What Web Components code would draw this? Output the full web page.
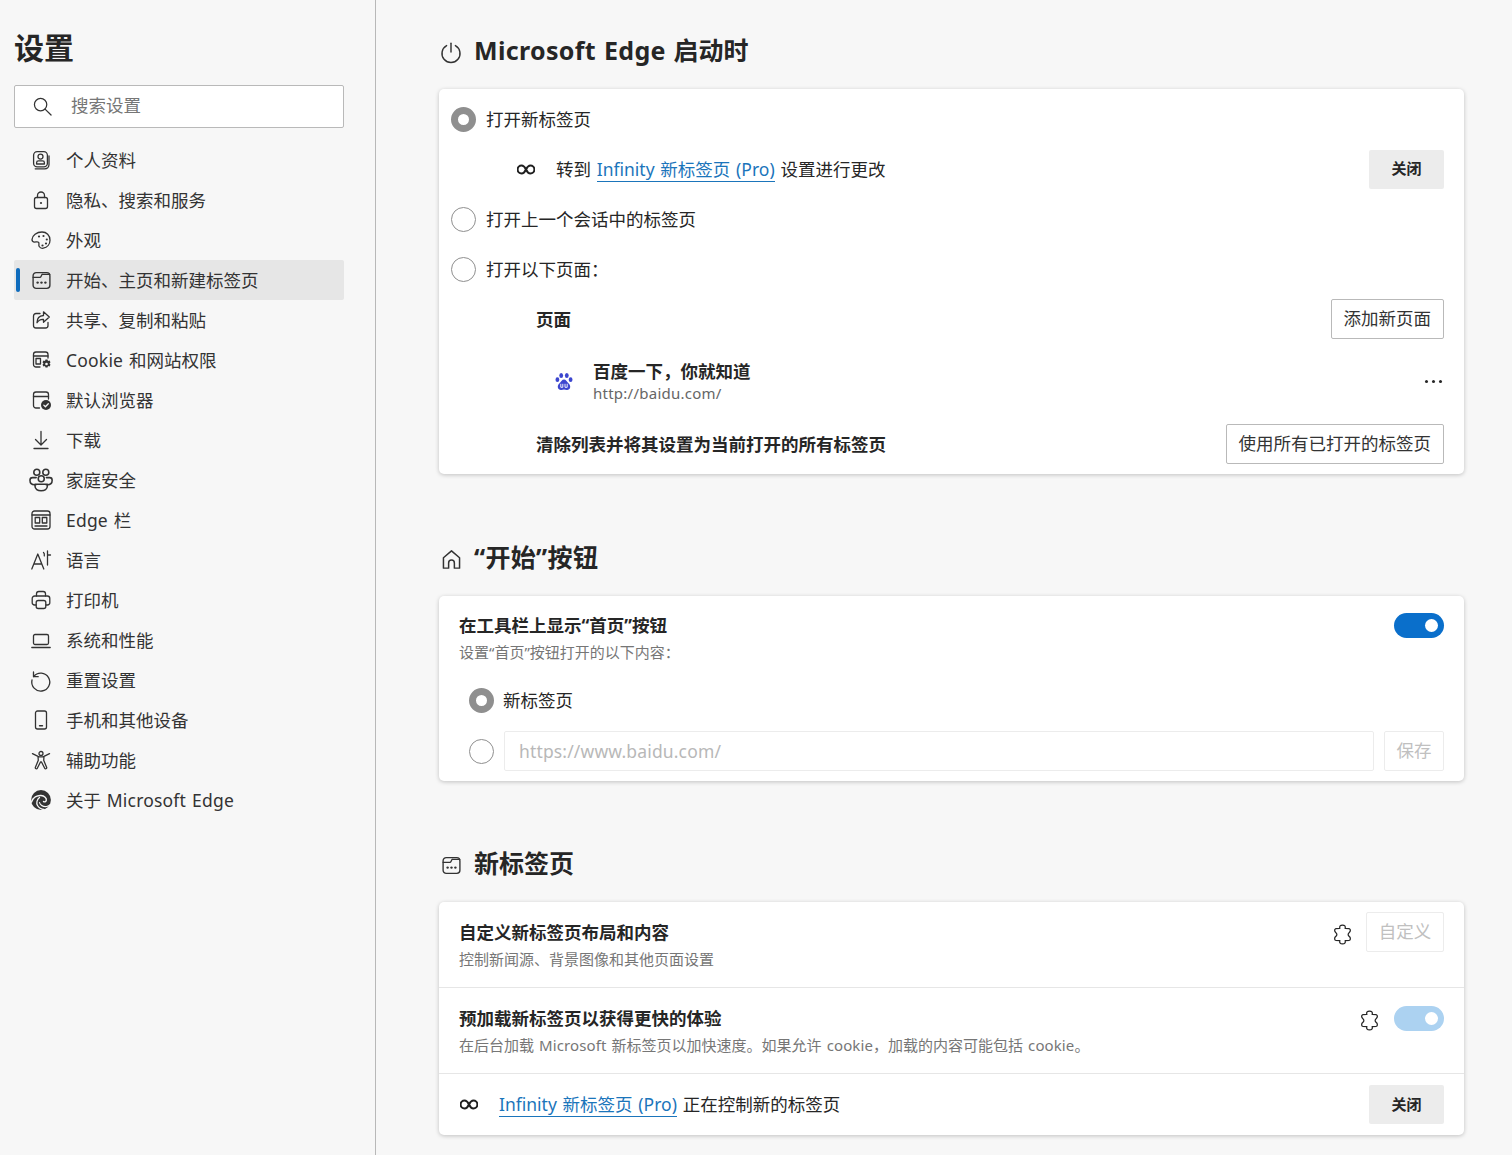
<!DOCTYPE html>
<html lang="zh-CN"><head><meta charset="utf-8"><title>设置</title>
<style>
html,body{margin:0;height:100%;background:#f7f7f7;overflow:hidden}
body{font-family:"Noto Sans","Noto Sans CJK SC",sans-serif;font-size:17.5px;color:#262626;word-spacing:1.2px}
</style></head><body>
<settings-app>
  <settings-nav slot="nav"></settings-nav>
  <settings-section icon="power" isize="22" top="31"><lat-text slot="title" wide>Microsoft Edge</lat-text><span slot="title"> 启动时</span>
    <startup-card></startup-card>
  </settings-section>
  <settings-section icon="home" isize="23" top="64"><lat-text slot="title" wide>“开始”按钮</lat-text>
    <home-card></home-card>
  </settings-section>
  <settings-section icon="tab" isize="21" top="63"><span slot="title">新标签页</span>
    <newtab-card></newtab-card>
  </settings-section>
</settings-app>
<script>
const ICONS={
profile:'<rect x="2.600" y="1.600" width="13.800" height="15.300" rx="3.600"/><circle cx="9.500" cy="6.600" r="2.500"/><path d="M5.600 14v-1.300c0-1 .8-1.800 1.800-1.800h4.200c1 0 1.800.8 1.800 1.800V14z"/><path d="M4.200 18.800h9.600c2.200 0 4.200-1.600 4.200-4.200V6"/>',
lock:'<rect x="3.500" y="7.500" width="13" height="11" rx="2"/><path d="M6.500 7.500V5.500a3.500 3.500 0 0 1 7 0v2"/><circle cx="10" cy="13" r="1.100" fill="currentColor" stroke="none"/>',
palette:'<path d="M11 2C5.800 2 1 5.700 1 9.600c0 1.500 1 2.500 2.600 2.500 1.500 0 3-.7 3.900.2 1.200 1.100-.3 2.700.7 4.200.9 1.400 2.600 2 4.100 1.700 4-.7 6.700-4 6.700-8C19 5.200 15.500 2 11 2z"/><circle cx="8" cy="6.500" r="1.100" fill="currentColor" stroke="none"/><circle cx="12.500" cy="6" r="1.100" fill="currentColor" stroke="none"/><circle cx="15.800" cy="9.500" r="1.100" fill="currentColor" stroke="none"/><circle cx="15" cy="13.500" r="1.100" fill="currentColor" stroke="none"/><circle cx="11.500" cy="15.500" r="1.100" fill="currentColor" stroke="none"/>',
tab:'<rect x="2" y="2.500" width="16" height="15" rx="3"/><path d="M2 7h6.500c1.200 0 1.200-2.300 2.300-2.800"/><path d="M10.800 4.200h7"/><circle cx="6.300" cy="12" r="1.150" fill="currentColor" stroke="none"/><circle cx="10" cy="12" r="1.150" fill="currentColor" stroke="none"/><circle cx="13.700" cy="12" r="1.150" fill="currentColor" stroke="none"/>',
share:'<path d="M9 3.500H5A2.500 2.500 0 0 0 2.500 6v9.500A2.500 2.500 0 0 0 5 18h9.500a2.500 2.500 0 0 0 2.500-2.500v-3"/><path d="M12.500 1.800 18.300 7l-5.800 5.200V9.300c-3-.2-5 .8-6.500 3.500 0-4.300 2.300-7 6.500-7.300z"/>',
cookie:'<path d="M9 17H5a2.500 2.500 0 0 1-2.500-2.500v-10A2.500 2.500 0 0 1 5 2h9.500A2.500 2.500 0 0 1 17 4.500V8"/><path d="M2.500 6H17"/><rect x="5" y="8.500" width="4.500" height="5.500"/><path d="M14.500 9.500h2l.5 1.500 1.500-.4 1 1.700-1 1.200 1 1.200-1 1.700-1.500-.4-.5 1.500h-2l-.5-1.500-1.500.4-1-1.700 1-1.200-1-1.200 1-1.700 1.500.4z" fill="currentColor" stroke="none"/><circle cx="15.500" cy="14" r="1.300" fill="#f7f7f7" stroke="none"/>',
browser:'<path d="M8.500 18H5a2.500 2.500 0 0 1-2.500-2.500V4.500A2.500 2.500 0 0 1 5 2h10a2.500 2.500 0 0 1 2.500 2.500V9"/><path d="M2.500 6.500h15"/><circle cx="15" cy="15" r="5" fill="currentColor" stroke="none"/><path d="M12.800 15.100l1.600 1.600 2.900-3" stroke="#f7f7f7" stroke-width="1.300"/>',
download:'<path d="M10 1.500v13M4.500 9.500l5.500 5.500 5.500-5.500M3 18.500h14"/>',
family:'<circle cx="6.500" cy="3.500" r="2.500"/><circle cx="14" cy="3.500" r="2.500"/><circle cx="10.200" cy="9" r="2.500"/><path d="M6 8H3C1.800 8 .8 9 .8 10.200c0 2.300 1.700 3.800 4 3.800h1"/><path d="M14.500 8h2.800c1.200 0 2 1 2 2.200 0 2.300-1.700 3.800-4 3.800h-1"/><path d="M5 13.500h10.300v1.500c0 2.500-2.300 4-5.200 4S5 17.500 5 15z"/>',
sidebar:'<rect x="1" y="1" width="18" height="18" rx="2.500"/><path d="M1 5h18"/><rect x="4.200" y="7.500" width="4.500" height="5.500"/><rect x="11.300" y="7.500" width="4.500" height="5.500"/><path d="M4 16h12"/>',
lang:'<path d="M.8 19 6.800 4l6 15M3 14h7.500"/><path d="M12.500 2.500c1 .8 1 2 .8 3.300M16.500 1v14M16.500 5h3"/>',
printer:'<path d="M5.500 6V3.800A2.300 2.300 0 0 1 7.800 1.500h4.400a2.300 2.300 0 0 1 2.300 2.300V6"/><path d="M5 15H3.500a2.300 2.300 0 0 1-2.300-2.300V8.500A2.500 2.500 0 0 1 3.700 6h12.600a2.500 2.500 0 0 1 2.500 2.500v4.200a2.300 2.300 0 0 1-2.300 2.300H15"/><rect x="5.200" y="10.500" width="9.600" height="8" rx="2"/>',
laptop:'<rect x="2.500" y="4.500" width="15" height="10" rx="1.500"/><path d="M.8 17.500h18.400"/>',
reset:'<path d="M2.500 2v4.700h4.700"/><path d="M2.700 6.500A9 9 0 1 1 1 10"/>',
phone:'<rect x="4.500" y="1" width="11" height="18" rx="2"/><path d="M8.500 15.800h3" stroke-width="1.400"/>',
access:'<circle cx="10" cy="3.500" r="2"/><path d="M1.500 3.600 7 6.300c1.800.8 4.200.8 6 0l5.500-2.700M13 6.500l-.3 3.800 3 7.200a1.100 1.100 0 0 1-2 .8L10.500 12h-1L6.300 18.300a1.100 1.100 0 0 1-2-.8l3-7.200L7 6.500"/>',
power:'<path d="M10 2v8"/><path d="M6 4.200A8.200 8.200 0 1 0 14 4.200"/>',
home:'<path d="M3 17.500h4.500v-4.500a2.500 2.500 0 0 1 5 0v4.500H17V8.500L10 2.500 3 8.500z"/>',
puzzle:'<path d="M7.500 4.200C6.800 2.200 8 1 10 1S13.200 2.200 12.500 4.200L16.500 4.500C17.800 5 17.800 7 16.500 8 15 9.200 15 10.800 16.500 12 17.800 13 17.800 15 16.500 15.500L12.500 15.800C13.200 17.800 12 19 10 19S6.800 17.800 7.500 15.800L3.500 15.500C2.200 15 2.200 13 3.500 12 5 10.800 5 9.200 3.500 8 2.200 7 2.200 5 3.500 4.500Z"/>',
search:'<circle cx="8" cy="8" r="6.500"/><path d="M12.700 12.700 19 19"/>',
edge:'<circle cx="10" cy="10" r="9.900" fill="currentColor" stroke="none"/><g stroke="#f7f7f7"><path d="M.5 12C2 7.500 6 5.200 10 5.500c3.500.3 5.800 2.500 5.300 4.800-.3 1.500-2 2-2.800 1.200" stroke-width="1.400"/><path d="M8.500 7.500C6 9.500 5 13 6.500 15.500c1.500 2.500 4 3.800 6.500 4" stroke-width="1.300"/><path d="M8.500 12.500c.5 2.500 3.500 4.500 7 4 1.500-.2 3-1 4-2.200" stroke-width="1.200"/></g>'
};
const ISIZE={family:24,tab:21};
const NAV=[['profile','个人资料'],['lock','隐私、搜索和服务'],['palette','外观'],['tab','开始、主页和新建标签页',1],['share','共享、复制和粘贴'],['cookie','<lat-text>Cookie</lat-text> 和网站权限'],['browser','默认浏览器'],['download','下载'],['family','家庭安全'],['sidebar','<lat-text>Edge</lat-text> 栏'],['lang','语言'],['printer','打印机'],['laptop','系统和性能'],['reset','重置设置'],['phone','手机和其他设备'],['access','辅助功能'],['edge','关于 <lat-text>Microsoft Edge</lat-text>']];
function shadow(el,html){el.attachShadow({mode:'open'}).innerHTML=html;}
class XIcon extends HTMLElement{connectedCallback(){
  const n=this.getAttribute('name'),b=this.getAttribute('box')||20,s=this.getAttribute('size')||ISIZE[n]||b,w=this.getAttribute('sw')||1.3;
  shadow(this,`<style>:host{display:inline-flex;flex:none;width:${b}px;height:${b}px;align-items:center;justify-content:center;color:inherit}svg{display:block;overflow:visible;flex:none}</style><svg width="${s}" height="${s}" viewBox="0 0 20 20" fill="none" stroke="currentColor" stroke-width="${w}" stroke-linecap="round" stroke-linejoin="round">${ICONS[n]||''}</svg>`);
}}
class LatText extends HTMLElement{constructor(){super();shadow(this,`<style>:host{display:inline;letter-spacing:.2px}:host([wide]){letter-spacing:.33px}:host([thin]){letter-spacing:.1px}</style><slot></slot>`);}}
class SettingsApp extends HTMLElement{constructor(){super();shadow(this,`<style>
:host{display:grid;grid-template-columns:375px 1px 1fr;height:1155px;overflow:hidden}
.rule{background:#b8b8b8}
main{padding:0 48px 0 63px;min-width:0}
</style><aside><slot name="nav"></slot></aside><div class="rule"></div><main><slot></slot></main>`);}}
class SettingsNav extends HTMLElement{constructor(){super();shadow(this,`<style>
:host{display:flex;flex-direction:column;padding:28px 31px 0 14px}
h1{margin:0;font-size:30px;line-height:40px;font-weight:700;color:#262626}
.search{margin-top:17px;height:41px;background:#fff;border:1px solid #b9b9b9;border-radius:2px;display:flex;align-items:center;padding-left:18px;gap:19px;color:#767676;font-size:17.5px;line-height:24px}
.search span{padding-bottom:3px}
.search x-icon{color:#333}
.list{margin-top:12px;display:flex;flex-direction:column}
</style><h1>设置</h1><div class="search"><x-icon name="search" box="19"></x-icon><span>搜索设置</span></div><div class="list">${NAV.map(n=>`<nav-item icon="${n[0]}" ${n[2]?'active':''}>${n[1]}</nav-item>`).join('')}</div>`);}}
class NavItem extends HTMLElement{constructor(){super();const a=this.getAttribute.bind(this);shadow(this,`<style>
:host{display:flex;align-items:center;height:40px;padding-left:17px;gap:15px;position:relative;border-radius:2px;line-height:24px;color:#333}
:host([active]){background:#e6e6e6}
:host([active])::before{content:"";position:absolute;left:2px;top:8px;height:24px;width:4px;border-radius:2px;background:#0f6cbd}
x-icon{color:#333}
</style><x-icon name="${a('icon')}"></x-icon><span><slot></slot></span>`);}}
class SettingsSection extends HTMLElement{constructor(){super();shadow(this,`<style>
:host{display:block;padding-top:${this.getAttribute('top')}px}
header{height:38px;margin-bottom:20px;display:flex;align-items:center;margin-left:2px;gap:13px}
h2{margin:0;font-size:25px;line-height:38px;font-weight:700;color:#262626}
x-icon{color:#333;margin-top:4px}
</style><header><x-icon name="${this.getAttribute('icon')}" size="${this.getAttribute('isize')}"></x-icon><h2><slot name="title"></slot></h2></header><slot></slot>`);}}
class SettingsCard extends HTMLElement{constructor(){super();shadow(this,`<style>
:host{display:block;background:#fff;border-radius:5px;box-shadow:0 1px 4px rgba(0,0,0,.22);overflow:hidden}
</style><slot></slot>`);}}
class RadioMark extends HTMLElement{constructor(){super();shadow(this,`<style>
:host{display:block;flex:none;box-sizing:border-box;width:25px;height:25px;border-radius:50%;border:1px solid #8f8f8f;background:#fff}
:host([checked]){border:7px solid #8f8f8f}
</style>`);}}
class ToggleSwitch extends HTMLElement{constructor(){super();shadow(this,`<style>
:host{display:block;flex:none;position:relative;width:50px;height:25px;border-radius:13px;background:#0a6fcb}
:host([dim]){background:#acd2f1}
i{position:absolute;right:6.500px;top:6px;width:13px;height:13px;border-radius:50%;background:#fff}
</style><i></i>`);}}
class UiButton extends HTMLElement{constructor(){super();shadow(this,`<style>
:host{display:flex;align-items:center;justify-content:center;flex:none;box-sizing:border-box;height:40px;padding:0 12px 2px;background:#fff;border:1px solid #b9b9b9;border-radius:2px;font-size:17.5px;line-height:24px;color:#333;white-space:nowrap}
:host([variant=soft]){background:#ececec;border:none;width:75px;height:39px;font-size:15px;font-weight:700;color:#262626}
:host([variant=off]){border-color:#ececec;color:#c0c0c0;width:78px;padding:0 0 2px}
:host([variant=save]){border-color:#ececec;color:#c0c0c0;width:60px;padding:0 0 2px}
</style><slot></slot>`);}}
class InfLink extends HTMLElement{constructor(){super();shadow(this,`<style>
:host{display:inline;color:#1b75bb;border-bottom:1px solid #1b75bb}
</style><slot></slot>`);}}
class InfGlyph extends HTMLElement{constructor(){super();shadow(this,`<style>:host{display:inline-flex;flex:none}svg{display:block}</style><svg width="18" height="11" viewBox="0 0 18 11" fill="none" stroke="#1f1f1f" stroke-width="2"><path d="M9 5.500C7.800 3 6.500 1.500 4.600 1.500a4 4 0 0 0 0 8C6.500 9.500 7.800 8 9 5.500c1.200-2.500 2.500-4 4.400-4a4 4 0 0 1 0 8C11.500 9.500 10.200 8 9 5.500z"/></svg>`);}}
class BaiduPaw extends HTMLElement{constructor(){super();shadow(this,`<style>:host{display:inline-flex;flex:none}svg{display:block}</style><svg width="18" height="19" viewBox="0 0 18 19" fill="#3c46cf"><ellipse cx="6.200" cy="3.400" rx="1.900" ry="2.500"/><ellipse cx="11.800" cy="3.400" rx="1.900" ry="2.500"/><ellipse cx="2.400" cy="7.700" rx="1.900" ry="2.400"/><ellipse cx="15.600" cy="7.700" rx="1.900" ry="2.400"/><path d="M9 7.500c-2 0-2.800 2-4 3.300-1.300 1.300-2.500 2.500-2.200 4.500.3 2 2 2.900 3.500 2.700 1-.1 1.800-.4 2.700-.4s1.700.3 2.700.4c1.500.2 3.200-.7 3.500-2.700.3-2-.9-3.200-2.200-4.500C11.800 9.500 11 7.500 9 7.500z"/><path d="M5.800 11.800v3.500h2v-3.500M10 11.800v3.500h2.200v-3.500" fill="none" stroke="#fff" stroke-width=".9"/></svg>`);}}
class StartupCard extends HTMLElement{constructor(){super();shadow(this,`<style>
:host{display:block}
settings-card{padding:5px 20px 5px 12px;line-height:24px}
.row{display:flex;align-items:center;height:50px}
.radio{gap:10px}
.ind{padding-left:66px;gap:21px}
.grow{flex:1}
.sub{padding-left:85px}
b{font-weight:700}
.site{height:75px;padding-left:104px}
.site .txt{margin-left:20px;flex:1;display:flex;flex-direction:column;padding-bottom:2px}
.site .u{font-size:15px;line-height:20px;color:#666;letter-spacing:.25px}
.site .t{line-height:24px;font-weight:700}
.dots{margin-right:2px;display:flex;gap:4px}
.dots i{width:3px;height:3px;border-radius:50%;background:#262626}
</style><settings-card>
<div class="row radio"><radio-mark checked></radio-mark><span>打开新标签页</span></div>
<div class="row ind"><inf-glyph></inf-glyph><span>转到 <inf-link>Infinity 新标签页 (Pro)</inf-link> 设置进行更改</span><span class="grow"></span><ui-button variant="soft">关闭</ui-button></div>
<div class="row radio"><radio-mark></radio-mark><span>打开上一个会话中的标签页</span></div>
<div class="row radio"><radio-mark></radio-mark><span>打开以下页面：</span></div>
<div class="row sub"><b class="grow">页面</b><ui-button>添加新页面</ui-button></div>
<div class="row site"><baidu-paw></baidu-paw><div class="txt"><span class="t">百度一下，你就知道</span><span class="u">http://baidu.com/</span></div><div class="dots"><i></i><i></i><i></i></div></div>
<div class="row sub"><b class="grow">清除列表并将其设置为当前打开的所有标签页</b><ui-button>使用所有已打开的标签页</ui-button></div>
</settings-card>`);}}
class HomeCard extends HTMLElement{constructor(){super();shadow(this,`<style>
:host{display:block}
settings-card{padding:17px 20px 10px 20px;line-height:24px}
.top{display:flex;justify-content:space-between;align-items:flex-start}
b{display:block;font-weight:700}
small{display:block;font-size:15px;line-height:20px;margin-top:5px;color:#767676}
.row{display:flex;align-items:center;padding-left:10px;gap:10px}
.r1{height:50px;margin-top:13px}
.r1 span{margin-left:-1px}
.r2{height:40px;margin-top:6px}
.field{flex:1;box-sizing:border-box;height:40px;border:1px solid #ececec;border-radius:2px;padding-left:14px;display:flex;align-items:center;color:#b8b8b8;letter-spacing:.15px}
</style><settings-card>
<div class="top"><div><b>在工具栏上显示“首页”按钮</b><small>设置“首页”按钮打开的以下内容：</small></div><toggle-switch></toggle-switch></div>
<div class="row r1"><radio-mark checked></radio-mark><span>新标签页</span></div>
<div class="row r2"><radio-mark></radio-mark><div class="field">https://www.baidu.com/</div><ui-button variant="save">保存</ui-button></div>
</settings-card>`);}}
class NewtabCard extends HTMLElement{constructor(){super();shadow(this,`<style>
:host{display:block}
settings-card{line-height:24px}
.row{box-sizing:border-box;height:86px;padding:18px 20px 0 20px;display:flex;align-items:flex-start;border-bottom:1px solid #e6e6e6}
.row>div{flex:1}
b{display:block;font-weight:700}
small{display:block;font-size:15px;line-height:20px;margin-top:5px;color:#767676}
.a{padding-top:10px}
.a x-icon{margin:12px 13px 0 0}
.b x-icon{margin:4px 14px 0 0}
.c{height:61px;padding:0 20px 0 21px;align-items:center;border:none;gap:21px}
.c span{flex:1;padding-bottom:2px}
.a .txt{padding-top:8px}
</style><settings-card>
<div class="row a"><div class="txt"><b>自定义新标签页布局和内容</b><small>控制新闻源、背景图像和其他页面设置</small></div><x-icon name="puzzle" box="21" sw="1.2"></x-icon><ui-button variant="off">自定义</ui-button></div>
<div class="row b"><div><b>预加载新标签页以获得更快的体验</b><small>在后台加载 <lat-text thin>Microsoft</lat-text> 新标签页以加快速度。如果允许 <lat-text thin>cookie</lat-text>，加载的内容可能包括 <lat-text thin>cookie</lat-text>。</small></div><x-icon name="puzzle" box="21" sw="1.2"></x-icon><toggle-switch dim></toggle-switch></div>
<div class="row c"><inf-glyph></inf-glyph><span><inf-link>Infinity 新标签页 (Pro)</inf-link> 正在控制新的标签页</span><ui-button variant="soft">关闭</ui-button></div>
</settings-card>`);}}
const defs={'x-icon':XIcon,'lat-text':LatText,'settings-app':SettingsApp,'settings-nav':SettingsNav,'nav-item':NavItem,'settings-section':SettingsSection,'settings-card':SettingsCard,'radio-mark':RadioMark,'toggle-switch':ToggleSwitch,'ui-button':UiButton,'inf-link':InfLink,'inf-glyph':InfGlyph,'baidu-paw':BaiduPaw,'startup-card':StartupCard,'home-card':HomeCard,'newtab-card':NewtabCard};
for(const k in defs)customElements.define(k,defs[k]);
</script></body></html>
